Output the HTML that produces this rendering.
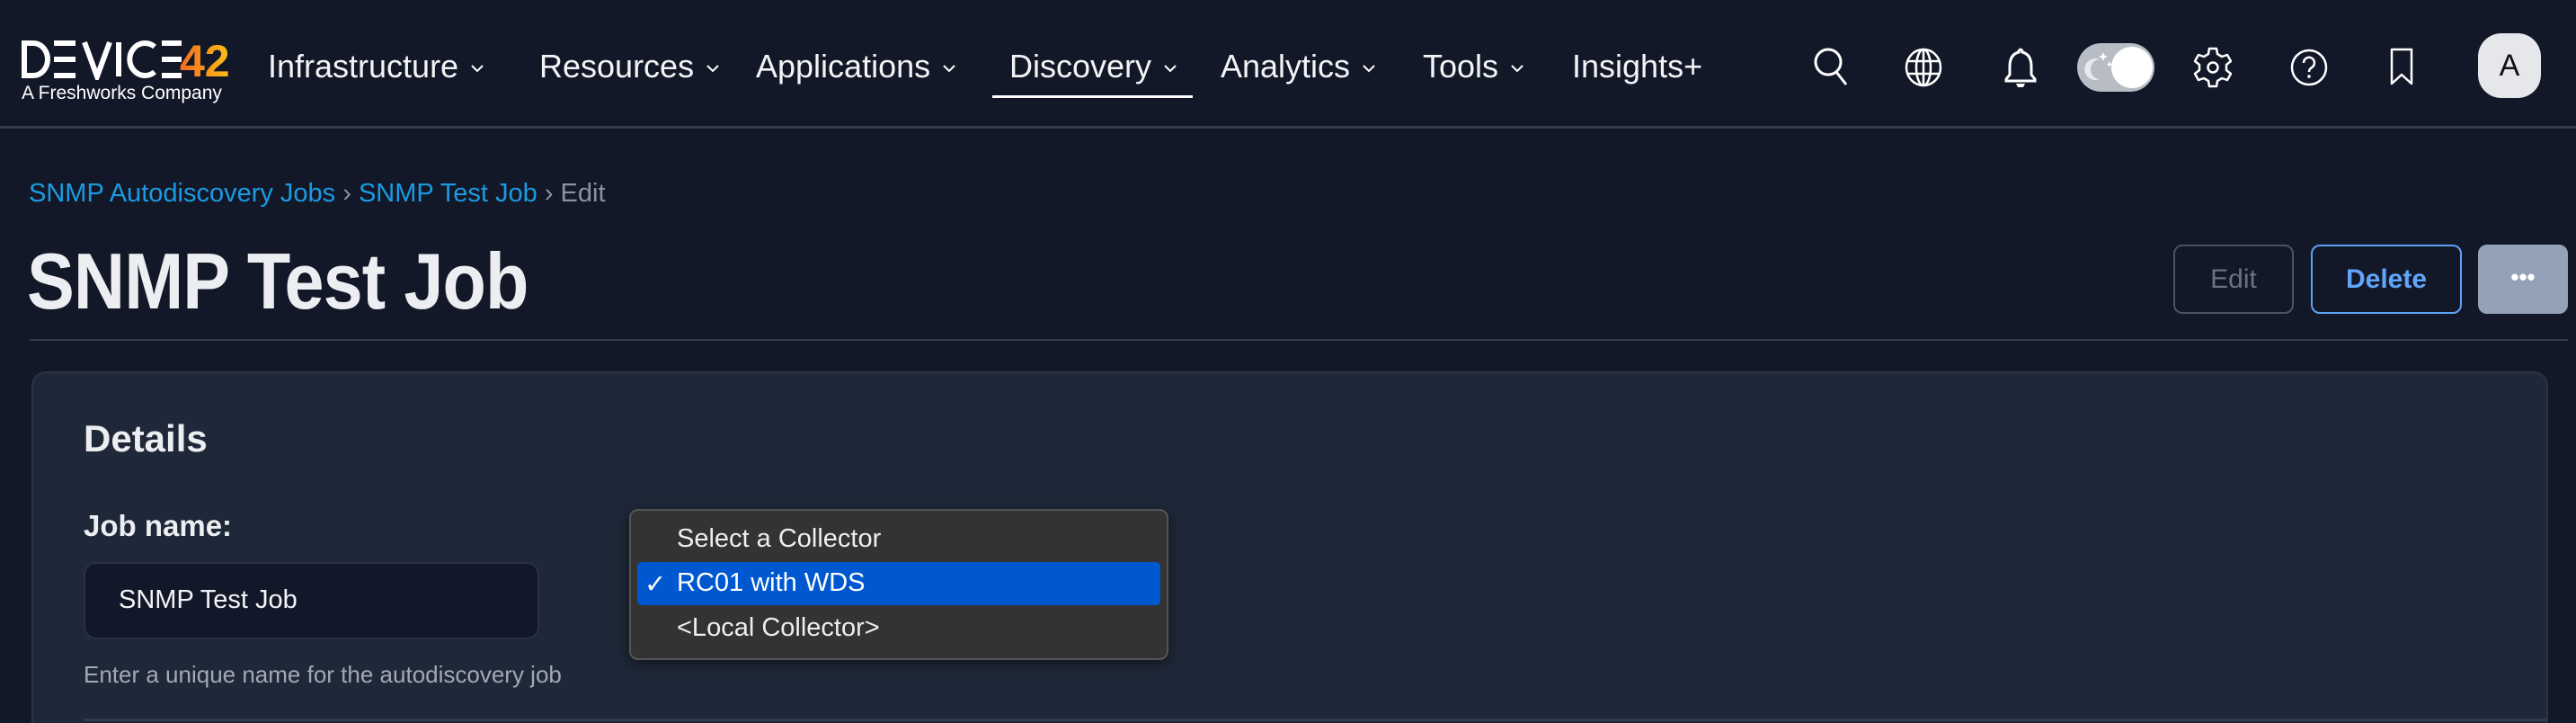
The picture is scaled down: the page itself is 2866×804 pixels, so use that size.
<!DOCTYPE html>
<html style="width:2866px;height:804px;overflow:hidden"><head><meta charset="utf-8"><style>
*{margin:0;padding:0;box-sizing:border-box}
html,body{width:2866px;height:804px;overflow:hidden}
body{background:#131829;font-family:"Liberation Sans","DejaVu Sans",sans-serif;position:relative;color:#e5e7eb}
.a{position:absolute;white-space:nowrap}
.nav{font-size:36px;color:#f3f4f6;top:52px;line-height:44px}
.chev{display:inline-block;width:18px;height:12px;margin-left:12px;vertical-align:middle}
.ic{position:absolute;top:51px}
</style></head><body>
<div class="a" style="left:0;top:0;width:2866px;height:143px;background:#131829;border-bottom:3px solid #353b4b"></div>
<svg class="a" style="left:22px;top:44px" width="240" height="45" viewBox="0 0 240 45">
<defs><linearGradient id="g" x1="0" x2="1"><stop offset="0" stop-color="#f26b21"/><stop offset="1" stop-color="#fbbf16"/></linearGradient></defs>
<g fill="none" stroke="#fff" stroke-width="6">
<path d="M5 4v36h10a16 18 0 0 0 0-36z"/>
<path d="M38 4h24M38 22h24M38 40h24"/>
<path d="M72 3l14 38l14-38"/>
<path d="M110 3v38"/>
<path d="M150 8a17 18 0 1 0 0 28"/>
<path d="M158 4h22M158 22h22M158 40h22"/>
</g>
<text x="178" y="41" font-size="50" font-weight="bold" fill="url(#g)" font-family="Liberation Sans">42</text>
</svg>
<div class="a" style="left:24px;top:92px;font-size:21px;color:#fff">A Freshworks Company</div>

<div class="a nav" style="left:298px">Infrastructure<svg class="chev" viewBox="0 0 18 12"><path d="M3 3l6 6l6-6" stroke="#fff" stroke-width="2" fill="none"/></svg></div>
<div class="a nav" style="left:600px">Resources<svg class="chev" viewBox="0 0 18 12"><path d="M3 3l6 6l6-6" stroke="#fff" stroke-width="2" fill="none"/></svg></div>
<div class="a nav" style="left:841px">Applications<svg class="chev" viewBox="0 0 18 12"><path d="M3 3l6 6l6-6" stroke="#fff" stroke-width="2" fill="none"/></svg></div>
<div class="a nav" style="left:1123px">Discovery<svg class="chev" viewBox="0 0 18 12"><path d="M3 3l6 6l6-6" stroke="#fff" stroke-width="2" fill="none"/></svg></div>
<div class="a" style="left:1104px;top:106px;width:223px;height:3px;background:#fff"></div>
<div class="a nav" style="left:1358px">Analytics<svg class="chev" viewBox="0 0 18 12"><path d="M3 3l6 6l6-6" stroke="#fff" stroke-width="2" fill="none"/></svg></div>
<div class="a nav" style="left:1583px">Tools<svg class="chev" viewBox="0 0 18 12"><path d="M3 3l6 6l6-6" stroke="#fff" stroke-width="2" fill="none"/></svg></div>
<div class="a nav" style="left:1749px">Insights+</div>

<svg class="ic" style="left:2016px" width="44" height="48" viewBox="0 0 44 48"><circle cx="18" cy="18" r="14" stroke="#fff" stroke-width="3" fill="none"/><path d="M27 29l11 14" stroke="#fff" stroke-width="3"/></svg>
<svg class="ic" style="left:2118px" width="44" height="48" viewBox="0 0 44 48"><g stroke="#fff" stroke-width="2.5" fill="none"><ellipse cx="22" cy="24" rx="19" ry="20"/><ellipse cx="22" cy="24" rx="8" ry="20"/><path d="M22 4v40M4 17h36M4 31h36"/></g></svg>
<svg class="ic" style="left:2228px" width="40" height="48" viewBox="0 0 40 48"><path d="M20 4a3 3 0 0 1 2 3c8 2 10 9 10 16v9l4 5v2H4v-2l4-5v-9c0-7 2-14 10-16a3 3 0 0 1 2-3z" stroke="#fff" stroke-width="3" fill="none"/><path d="M15 42h10l-2 4h-6z" fill="#fff"/></svg>
<div class="a" style="left:2311px;top:48px;width:86px;height:54px;border-radius:27px;background:#b8bcc4"></div>
<div class="a" style="left:2349px;top:52px;width:46px;height:46px;border-radius:50%;background:#fff"></div>
<svg class="a" style="left:2318px;top:56px" width="34" height="40" viewBox="0 0 34 40"><path d="M18 10a12 12 0 1 0 0 22a10 11 0 0 1 0-22z" fill="#e9eaee"/><path d="M22 2l1.5 3.5L27 7l-3.5 1.5L22 12l-1.5-3.5L17 7l3.5-1.5zM29 12l1 2.5 2.5 1-2.5 1-1 2.5-1-2.5-2.5-1 2.5-1z" fill="#fff"/></svg>
<svg class="ic" style="left:2440px" width="44" height="48" viewBox="0 0 44 48"><path d="M18 3h8l1 6 5 3 6-2 4 7-5 4v6l5 4-4 7-6-2-5 3-1 6h-8l-1-6-5-3-6 2-4-7 5-4v-6l-5-4 4-7 6 2 5-3z" stroke="#fff" stroke-width="2.5" fill="none" stroke-linejoin="round"/><circle cx="22" cy="24" r="5.5" stroke="#fff" stroke-width="2.5" fill="none"/></svg>
<svg class="ic" style="left:2547px" width="44" height="48" viewBox="0 0 44 48"><circle cx="22" cy="24" r="19" stroke="#fff" stroke-width="2.5" fill="none"/><path d="M16 19a6 6 0 1 1 9 5c-2 1.5-3 2.5-3 5" stroke="#fff" stroke-width="2.5" fill="none"/><circle cx="22" cy="34" r="1.8" fill="#fff"/></svg>
<svg class="ic" style="left:2656px" width="32" height="48" viewBox="0 0 32 48"><path d="M5 4h22v38l-11-10-11 10z" stroke="#fff" stroke-width="2.5" fill="none" stroke-linejoin="round"/></svg>
<div class="a" style="left:2757px;top:37px;width:70px;height:72px;border-radius:26px;background:#e5e7eb;color:#111;font-size:34px;text-align:center;line-height:72px">A</div>

<div class="a" style="left:32px;top:199px;font-size:29px;color:#1c9ae0">SNMP Autodiscovery Jobs <span style="color:#8b929e">›</span> SNMP Test Job <span style="color:#8b929e">› Edit</span></div>
<div class="a" style="left:30px;top:262px;font-size:88px;font-weight:bold;color:#eceef1;letter-spacing:-1px;transform:scaleX(0.9);transform-origin:left top">SNMP Test Job</div>

<div class="a" style="left:2418px;top:272px;width:134px;height:77px;border:2px solid #4b5261;border-radius:10px;color:#6b7280;font-size:30px;text-align:center;line-height:73px">Edit</div>
<div class="a" style="left:2571px;top:272px;width:168px;height:77px;border:2px solid #5ea2f4;border-radius:10px;color:#60a5fa;font-size:30px;font-weight:bold;text-align:center;line-height:73px">Delete</div>
<div class="a" style="left:2757px;top:272px;width:100px;height:77px;background:#94a2b8;border-radius:10px;color:#fff;font-size:26px;font-weight:bold;text-align:center;line-height:72px">•••</div>
<div class="a" style="left:33px;top:377px;width:2824px;height:2px;background:#353b4b"></div>

<div class="a" style="left:35px;top:413px;width:2800px;height:391px;background:#1f2838;border:2px solid #2b3343;border-bottom:none;border-radius:16px 16px 0 0"></div>
<div class="a" style="left:93px;top:464px;font-size:42px;font-weight:bold;color:#eceef1">Details</div>
<div class="a" style="left:93px;top:566px;font-size:33px;font-weight:bold;color:#eceef1">Job name:</div>
<div class="a" style="left:93px;top:625px;width:507px;height:86px;background:#121829;border:2px solid #2a3141;border-radius:14px"></div>
<div class="a" style="left:132px;top:651px;font-size:29px;color:#f3f4f6">SNMP Test Job</div>
<div class="a" style="left:93px;top:735px;font-size:26px;color:#a3a9b3">Enter a unique name for the autodiscovery job</div>
<div class="a" style="left:93px;top:799px;width:2740px;height:3px;background:#353b4b"></div>

<div class="a" style="left:700px;top:566px;width:600px;height:168px;background:#333333;border:2px solid #555;border-radius:10px;box-shadow:0 4px 16px rgba(0,0,0,.5)"></div>
<div class="a" style="left:709px;top:625px;width:582px;height:48px;background:#0058d0;border-radius:5px"></div>
<div class="a" style="left:753px;top:583px;font-size:29px;color:#eee">Select a Collector</div>
<div class="a" style="left:717px;top:632px;font-size:29px;color:#fff">✓</div>
<div class="a" style="left:753px;top:632px;font-size:29px;color:#fff">RC01 with WDS</div>
<div class="a" style="left:753px;top:682px;font-size:29px;color:#eee">&lt;Local Collector&gt;</div>
</body></html>
